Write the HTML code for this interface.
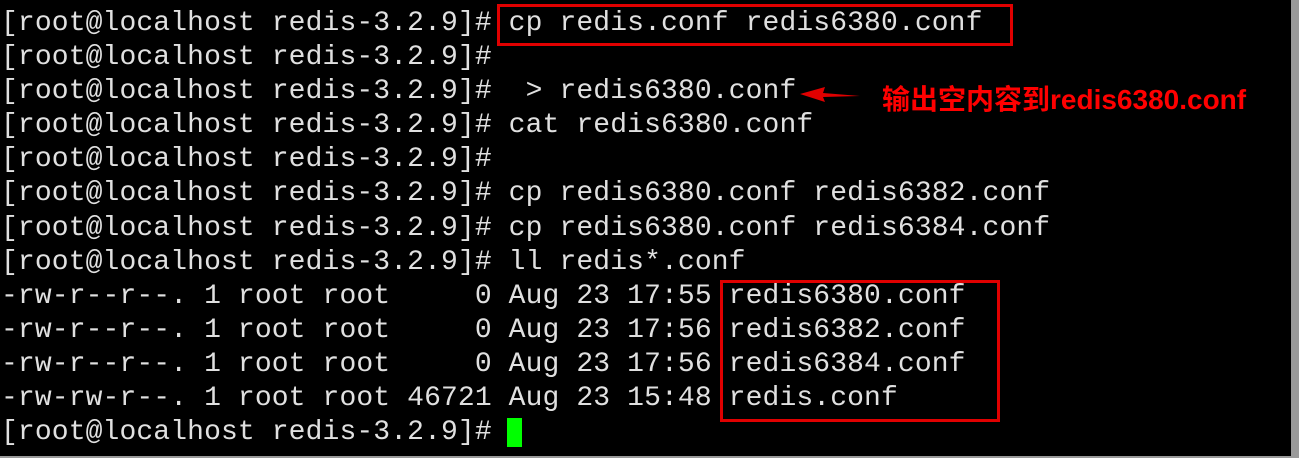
<!DOCTYPE html><html><head><style>
body{margin:0;width:1299px;height:458px;background:#9a9a9a;overflow:hidden;position:relative}
#t{position:absolute;left:0;top:0;width:1291px;height:456px;background:#000}
pre{margin:0;position:absolute;left:1px;top:7px;font:28px/34.1px "Liberation Mono","DejaVu Sans Mono",monospace;letter-spacing:0.12px;color:#e0e0e0}
.b{position:absolute;border:3px solid #e00000}
</style></head><body><div id="t">
<pre>[root@localhost redis-3.2.9]# cp redis.conf redis6380.conf
[root@localhost redis-3.2.9]#
[root@localhost redis-3.2.9]#  &gt; redis6380.conf
[root@localhost redis-3.2.9]# cat redis6380.conf
[root@localhost redis-3.2.9]#
[root@localhost redis-3.2.9]# cp redis6380.conf redis6382.conf
[root@localhost redis-3.2.9]# cp redis6380.conf redis6384.conf
[root@localhost redis-3.2.9]# ll redis*.conf
-rw-r--r--. 1 root root     0 Aug 23 17:55 redis6380.conf
-rw-r--r--. 1 root root     0 Aug 23 17:56 redis6382.conf
-rw-r--r--. 1 root root     0 Aug 23 17:56 redis6384.conf
-rw-rw-r--. 1 root root 46721 Aug 23 15:48 redis.conf
[root@localhost redis-3.2.9]#</pre>
<div class="b" style="left:497px;top:4px;width:510px;height:36px"></div>
<div class="b" style="left:720px;top:280px;width:274px;height:136px"></div>
<div style="position:absolute;left:507px;top:418px;width:15px;height:29px;background:#00ff00"></div>
<svg style="position:absolute;left:795px;top:86px" width="70" height="18"><polygon points="5,8 30,1 28,7 65,10 28,11 30,16" fill="#e00000"/></svg>
<div style="position:absolute;left:882px;top:83px;color:#ff0000;font:bold 28px/34px 'Liberation Sans','Noto Sans CJK SC',sans-serif">输出空内容到redis6380.conf</div>
</div></body></html>
